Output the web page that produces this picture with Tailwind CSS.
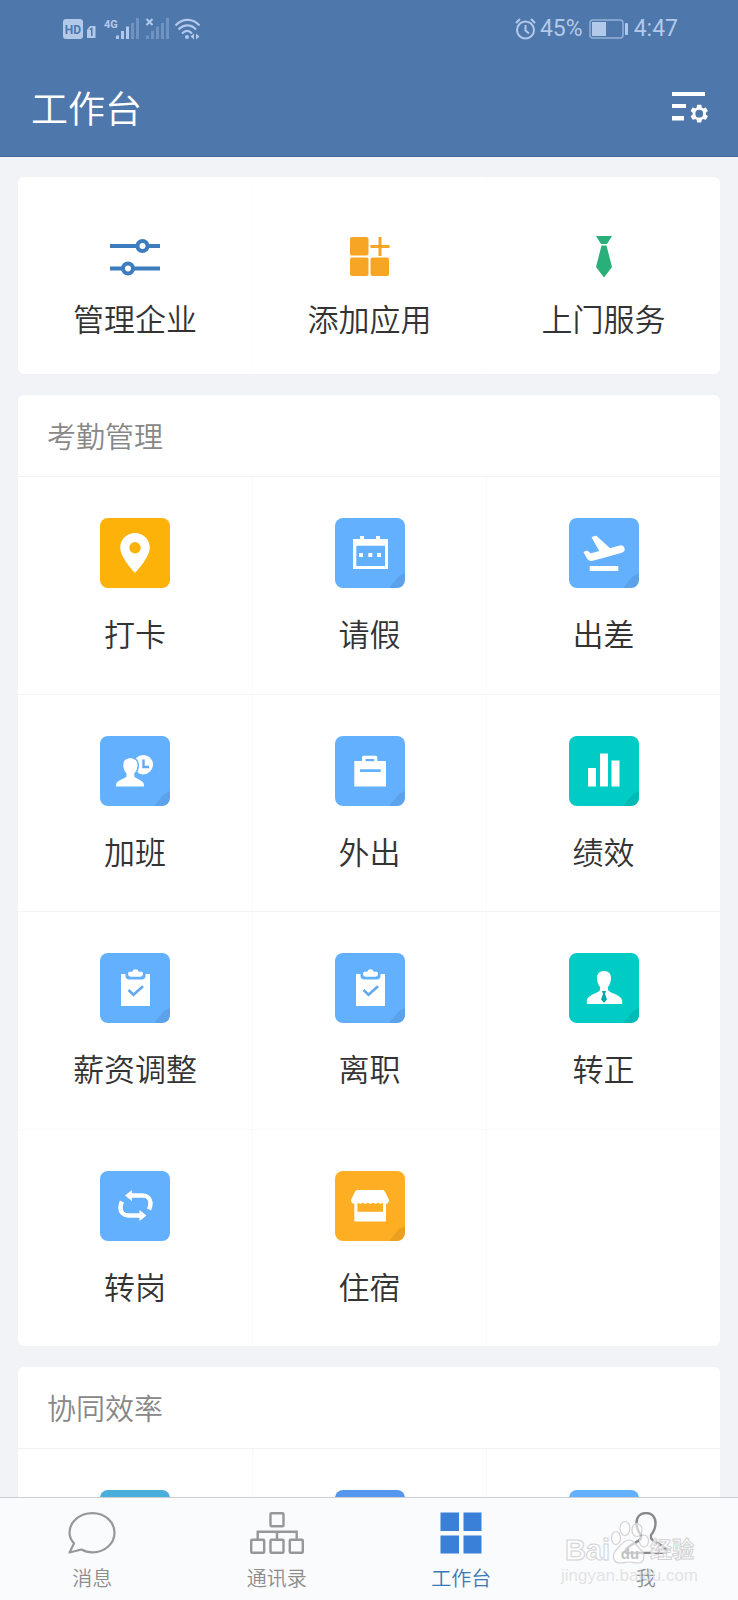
<!DOCTYPE html>
<html lang="zh-CN">
<head>
    <meta charset="UTF-8">
    <meta name="viewport" content="width=device-width, initial-scale=1.0">
    <title>工作台</title>
    <script src="https://cdn.jsdelivr.net/npm/@tailwindcss/browser@4"></script>
</head>
<body class="h-screen flex flex-col overflow-hidden bg-[#f1f3f6] font-['Roboto','Noto_Sans_CJK_SC',sans-serif] font-[350] text-[#333]">

    <!-- shared shapes -->
    <svg class="hidden">
        <symbol id="clipboard" viewBox="0 0 70 70">
            <path fill="#fff" d="M21 21h29v32H21z"/>
            <path fill="#63b0fe" d="M25.500 20h20v3c0 2-1.500 3.500-3.500 3.500H29c-2 0-3.500-1.500-3.500-3.500z"/>
            <path fill="#fff" d="M28 20.500c0-1.200 1-1.700 2-1.700h2.300a3.300 3.300 0 0 1 6.400 0H41c1 0 2 .5 2 1.700 0 2-1 3.200-3 3.200h-9c-2 0-3-1.200-3-3.200z"/>
            <path fill="none" stroke="#63a9f0" stroke-width="2.600" d="M28.500 37l5 4.700 9.500-8.500"/>
        </symbol>
        <symbol id="fold" viewBox="0 0 70 70">
            <path fill="#000" fill-opacity=".08" d="M70 55L64 58 59 64 54 70H70z"/>
        </symbol>
    </svg>

    <header class="shrink-0 bg-[#4e77ab] border-b border-[#44699a] text-white">
        <div class="flex items-center justify-between h-[58px] pl-[63px] pr-[60px] text-[#b3c9ea]">
            <svg class="w-[138px] h-[22px]" viewBox="0 0 138 22" fill="#b3c9ea">
                <rect x="0" y="1" width="20" height="20" rx="3"/>
                <text x="10" y="15.500" text-anchor="middle" font-family="Roboto" font-size="12" font-weight="700" fill="#4e77ab">HD</text>
                <path d="M24 12l3-4h5.500v12H24z"/>
                <path d="M27 11.500l1.800-1v7.500" stroke="#4e77ab" stroke-width="1.500" fill="none"/>
                <text x="41" y="10" font-family="Roboto" font-size="11" font-weight="700">4G</text>
                <path d="M53 17.500h3V21h-3zM58 13h3v8h-3zM63 8.500h3V21h-3z"/>
                <path fill-opacity=".35" d="M68 5h3v16h-3zM73 0h3v21h-3zM83 17.500h3V21h-3zM88 13h3v8h-3zM93 8.500h3V21h-3zM98 5h3v16h-3zM103 0h3v21h-3z"/>
                <path d="M83.500 1l6 6M89.500 1l-6 6" stroke="#b3c9ea" stroke-width="2"/>
                <g fill="none" stroke="#b3c9ea" stroke-width="2.200">
                    <path d="M112.500 7.500c7-7.500 17.500-7.500 24 0M115.500 11.500c5.500-5.500 12.500-5.500 17.500 0M119 15.500c3.500-3.500 7-3.500 10 0"/>
                </g>
                <circle cx="124" cy="19" r="2"/>
                <path d="M131 15.500v6l-3.500-3zM133 15.500v6l3.500-3z"/>
            </svg>
            <div class="flex items-center text-[23px] font-normal leading-7">
                <svg class="w-[21px] h-[22px] mr-1" viewBox="0 0 21 22" fill="none" stroke="#b3c9ea" stroke-width="2">
                    <circle cx="10.500" cy="12" r="8.500"/>
                    <path d="M10.500 7v5.500l3.500 3M1 5l4-4M20 5l-4-4"/>
                </svg>
                <span>45%</span>
                <svg class="w-[39px] h-[20px] mx-1.5" viewBox="0 0 39 20">
                    <rect x="1" y="1" width="33" height="18" rx="3" fill="none" stroke="#b3c9ea" stroke-opacity=".7" stroke-width="1.500"/>
                    <rect x="3" y="3" width="14" height="14" fill="#b3c9ea"/>
                    <rect x="36" y="4" width="3" height="12" rx="1" fill="#b3c9ea"/>
                </svg>
                <span>4:47</span>
            </div>
        </div>
        <div class="flex items-start justify-between h-[98px] pl-[31px] pr-7 pt-[33px]">
            <h1 class="text-[37px] leading-10">工作台</h1>
            <button type="button" aria-label="设置">
                <svg class="w-[38px] h-[33px]" viewBox="0 0 38 33" fill="#fff">
                    <path d="M0 1h33v4H0zM0 13h14v4H0zM0 25h12v4.500H0z"/>
                    <path transform="translate(16.200 11.600) scale(.92)" d="M19.140 12.940c.04-.3.06-.61.06-.94 0-.32-.02-.64-.07-.94l2.030-1.580c.18-.14.23-.41.120-.61l-1.920-3.320c-.12-.22-.37-.29-.59-.22l-2.390.96c-.5-.38-1.030-.7-1.620-.94l-.36-2.540c-.04-.24-.24-.41-.48-.41h-3.840c-.24 0-.43.17-.47.41l-.36 2.540c-.59.24-1.130.57-1.620.94l-2.390-.96c-.22-.08-.47 0-.59.22L2.740 8.870c-.12.21-.08.47.12.61l2.030 1.580c-.05.3-.09.63-.09.94s.02.64.07.94l-2.030 1.580c-.18.14-.23.41-.12.610l1.920 3.320c.12.22.37.29.59.22l2.390-.96c.5.38 1.030.7 1.620.94l.36 2.540c.05.24.24.41.48.41h3.840c.24 0 .44-.17.47-.41l.36-2.540c.59-.24 1.130-.56 1.620-.94l2.390.96c.22.08.47 0 .59-.22l1.920-3.320c.12-.22.07-.47-.12-.61l-2.010-1.580zM12 16.200a4.200 4.200 0 1 1 0-8.400 4.200 4.200 0 0 1 0 8.400z"/>
                </svg>
            </button>
        </div>
    </header>

    <main class="flex-1 min-h-0 overflow-hidden flex flex-col gap-[21px] px-[18px] pt-5">

        <!-- quick actions -->
        <section class="shrink-0 grid grid-cols-3 bg-white rounded-md text-[31px] leading-10">
            <a href="#" class="flex flex-col items-center gap-6 pt-[60px] pb-[33px]">
                <svg class="w-[50px] h-[40px]" viewBox="0 0 50 40" fill="#fff" stroke="#3d7dbf" stroke-width="4">
                    <path d="M0 9h50M0 31.500h50"/>
                    <circle cx="32.500" cy="9" r="5"/>
                    <circle cx="18" cy="31.500" r="5"/>
                </svg>
                <span>管理企业</span>
            </a>
            <a href="#" class="flex flex-col items-center gap-6 pt-[60px] pb-[33px] border-l border-[#fcfcfd]">
                <svg class="w-[40px] h-[40px]" viewBox="0 0 40 40" fill="#f7a524">
                    <rect x="0" y="0" width="18.500" height="18.500" rx="2"/>
                    <rect x="0" y="20.500" width="18.500" height="18.500" rx="2"/>
                    <rect x="20.500" y="20.500" width="18.500" height="18.500" rx="2"/>
                    <path d="M28.500 0h3v8h8v3h-8v8h-3v-8h-8V8h8z"/>
                </svg>
                <span>添加应用</span>
            </a>
            <a href="#" class="flex flex-col items-center gap-6 pt-[60px] pb-[33px] border-l border-[#fcfcfd]">
                <svg class="w-[16px] h-[40px]" viewBox="0 0 16 40" fill="#29b07a" overflow="visible">
                    <path d="M0-1h16l-5 8H5zM5.500 8.500h5L16 30 8 40.500 0 30z"/>
                </svg>
                <span>上门服务</span>
            </a>
        </section>

        <section class="shrink-0 bg-white rounded-md">
            <h2 class="pl-[29px] pr-7 pt-[23px] pb-[18px] text-[29px] leading-10 text-[#888] border-b border-[#f1f1f2]">考勤管理</h2>
            <div class="grid grid-cols-3 text-[31px] leading-10">
                <a href="#" class="flex flex-col items-center gap-7 pt-[41px] pb-[38px] border-b border-[#f3f3f4]">
                    <svg class="w-[70px] h-[70px] rounded-lg bg-[#fdb209]" viewBox="0 0 70 70">
                        <path fill="#fff" fill-rule="evenodd" d="M35 15c-8.300 0-14.800 6.500-14.800 14.600C20.200 40 35 55 35 55s14.800-15 14.800-25.400C49.800 21.500 43.300 15 35 15zm0 9a5.700 5.700 0 1 1 0 11.400A5.700 5.700 0 0 1 35 24z"/>
                    </svg>
                    <span>打卡</span>
                </a>
                <a href="#" class="flex flex-col items-center gap-7 pt-[41px] pb-[38px] border-b border-l border-b-[#f3f3f4] border-l-[#fafafb]">
                    <svg class="w-[70px] h-[70px] rounded-lg bg-[#63b0fe]" viewBox="0 0 70 70">
                        <use href="#fold"/>
                        <path fill="#fff" fill-rule="evenodd" d="M18 21h7v-3h4v3h12v-3h4v3h8v30H18zM21.300 27.700V48H50V27.700z"/>
                        <path fill="#fff" d="M24 35h4v4h-4zM33.300 35h4v4h-4zM42 35h4v4h-4z"/>
                    </svg>
                    <span>请假</span>
                </a>
                <a href="#" class="flex flex-col items-center gap-7 pt-[41px] pb-[38px] border-b border-l border-b-[#f3f3f4] border-l-[#fafafb]">
                    <svg class="w-[70px] h-[70px] rounded-lg bg-[#63b0fe]" viewBox="0 0 70 70">
                        <use href="#fold"/>
                        <path fill="#fff" d="M20.700 48h28.600v5H20.700z"/>
                        <path fill="#fff" stroke="#fff" stroke-width=".8" stroke-linejoin="round" transform="translate(11 11) scale(2)" d="M21.870 9.640c-.21-.8-1.040-1.280-1.840-1.060L14.920 10l-6.900-6.230-1.730.51 3.940 6.970-4.970 1.330-1.770-1.340-1.250.39 1.620 2.960c.6 1 1.400 1.200 2.370.9l5.310-1.420 4.350-1.160L20.800 11.490c.81-.23 1.280-1.050 1.070-1.850z"/>
                    </svg>
                    <span>出差</span>
                </a>

                <a href="#" class="flex flex-col items-center gap-7 pt-[41px] pb-[37px] border-b border-[#f3f3f4]">
                    <svg class="w-[70px] h-[70px] rounded-lg bg-[#63b0fe]" viewBox="0 0 70 70">
                        <use href="#fold"/>
                        <circle cx="43.300" cy="28.700" r="9.700" fill="#fff"/>
                        <path fill="none" stroke="#63a9f0" stroke-width="2.400" d="M43.500 23.500v7.500h5.500"/>
                        <path fill="#fff" stroke="#63b0fe" stroke-width="3" paint-order="stroke" d="M30.300 22.300c-4.800 0-7.300 3-7 7.500.2 3.200 1.200 5.700 3.200 7.400v3.300c-1 2-9.500 3.500-10.300 7.500l-.2 2.500h28l-.2-2.500c-.8-4-8.500-5.500-9.500-7.500v-3.300c2-1.700 3-4.200 3.200-7.400.3-4.500-2.400-7.500-7.200-7.500z"/>
                    </svg>
                    <span>加班</span>
                </a>
                <a href="#" class="flex flex-col items-center gap-7 pt-[41px] pb-[37px] border-b border-l border-b-[#f3f3f4] border-l-[#fafafb]">
                    <svg class="w-[70px] h-[70px] rounded-lg bg-[#63b0fe]" viewBox="0 0 70 70">
                        <use href="#fold"/>
                        <path fill="#fff" fill-rule="evenodd" d="M19.300 25H27v-3.500c0-1 .7-1.700 1.700-1.700h12c1 0 1.600.7 1.600 1.700V25H51v25.500H19.300zM30.500 23v2.300h8.700V23zM25 33.300V36h20.700v-2.700z"/>
                    </svg>
                    <span>外出</span>
                </a>
                <a href="#" class="flex flex-col items-center gap-7 pt-[41px] pb-[37px] border-b border-l border-b-[#f3f3f4] border-l-[#fafafb]">
                    <svg class="w-[70px] h-[70px] rounded-lg bg-[#00cbc5]" viewBox="0 0 70 70">
                        <use href="#fold"/>
                        <path fill="#fff" d="M19 32h8v18.500h-8zM31 17.500h8v33h-8zM42.500 24.500h8v26h-8z"/>
                    </svg>
                    <span>绩效</span>
                </a>

                <a href="#" class="flex flex-col items-center gap-7 pt-[41px] pb-[38px] border-b border-[#fafafb]">
                    <svg class="w-[70px] h-[70px] rounded-lg bg-[#63b0fe]" viewBox="0 0 70 70">
                        <use href="#fold"/>
                        <use href="#clipboard"/>
                    </svg>
                    <span>薪资调整</span>
                </a>
                <a href="#" class="flex flex-col items-center gap-7 pt-[41px] pb-[38px] border-b border-l border-[#fafafb]">
                    <svg class="w-[70px] h-[70px] rounded-lg bg-[#63b0fe]" viewBox="0 0 70 70">
                        <use href="#fold"/>
                        <use href="#clipboard"/>
                    </svg>
                    <span>离职</span>
                </a>
                <a href="#" class="flex flex-col items-center gap-7 pt-[41px] pb-[38px] border-b border-l border-[#fafafb]">
                    <svg class="w-[70px] h-[70px] rounded-lg bg-[#00cbc5]" viewBox="0 0 70 70">
                        <use href="#fold"/>
                        <path fill="#fff" d="M35 18c-4.700 0-7.300 3-7 7.600.2 3.600 1.300 6.400 3 8.400v3c-1.500 3-12.500 5-13.200 10.500V51h35.400v-3.500C52.500 42 40.500 40 39 37v-3c1.700-2 2.800-4.800 3-8.400.3-4.600-2.300-7.600-7-7.600z"/>
                        <path fill="#00aaa6" d="M33 38h4l-1 3 2 5.500-3 3.300-3-3.300 2-5.500z"/>
                    </svg>
                    <span>转正</span>
                </a>

                <a href="#" class="flex flex-col items-center gap-7 pt-[41px] pb-[37px]">
                    <svg class="w-[70px] h-[70px] rounded-lg bg-[#63b0fe]" viewBox="0 0 70 70">
                        <g fill="none" stroke="#fff" stroke-width="4.500">
                            <path d="M30 24.500h12.500c5 0 8 3.500 8 7.500 0 2.500-.5 4.500-1.500 6.500"/>
                            <path d="M41 44.500H28.500c-5 0-8-3.500-8-7.500 0-2.500.5-4.500 1.500-6.500"/>
                        </g>
                        <path fill="#fff" d="M25 24.500l7-5.500v11zM46.500 44.500l-7-5.500v11z"/>
                    </svg>
                    <span>转岗</span>
                </a>
                <a href="#" class="flex flex-col items-center gap-7 pt-[41px] pb-[37px] border-l border-[#fafafb]">
                    <svg class="w-[70px] h-[70px] rounded-lg bg-[#feae22]" viewBox="0 0 70 70">
                        <use href="#fold"/>
                        <path fill="#fff" fill-rule="evenodd" d="M22 19h26.500l1.500 1.500 4 8.500c0 2-1 3.500-3 4v17.500H19.300V33c-2-.5-3.300-2-3.300-4l4-8.500zM22.500 31.500v9.200H48v-9.200c-1.500 1.500-3.500 1.700-5 0-1.500 1.700-3.500 1.700-5 0-1.500 1.700-3.700 1.700-5.200 0-1.500 1.700-3.600 1.700-5.100 0-1.500 1.700-3.700 1.500-5.200 0z"/>
                    </svg>
                    <span>住宿</span>
                </a>
                <div class="border-l border-[#fafafb]"></div>
            </div>
        </section>

        <!-- runs on below the tab bar -->
        <section class="shrink-0 bg-white rounded-md">
            <h2 class="pl-[29px] pr-7 pt-[23px] pb-[18px] text-[29px] leading-10 text-[#888] border-b border-[#f1f1f2]">协同效率</h2>
            <div class="grid grid-cols-3">
                <div class="flex justify-center pt-[41px] pb-10"><div class="size-[70px] rounded-lg bg-[#4aaedb]"></div></div>
                <div class="flex justify-center pt-[41px] pb-10 border-l border-[#f8f8f9]"><div class="size-[70px] rounded-lg bg-[#5597ee]"></div></div>
                <div class="flex justify-center pt-[41px] pb-10 border-l border-[#f8f8f9]"><div class="size-[70px] rounded-lg bg-[#63b0fe]"></div></div>
            </div>
        </section>
    </main>

    <nav class="relative shrink-0 grid grid-cols-4 bg-[#fafbfc] border-t border-[#cdcfd1] pt-3.5 pb-[7px] text-xl leading-7 text-[#8d8d8d]">
        <a href="#" class="flex flex-col items-center gap-[11px]">
            <svg class="w-[48px] h-[42px]" viewBox="0 0 48 42" fill="none" stroke="#979797" stroke-width="2.200" stroke-linejoin="round">
                <path d="M1.500 40.500l4.500-9C3 28 1.500 24.500 1.500 20.700 1.500 10 11.500 1.200 24.300 1.200S46.500 10 46.500 20.700 37 40.300 24.500 40.300c-4 0-8-1-11-2.800z"/>
            </svg>
            <span>消息</span>
        </a>
        <a href="#" class="flex flex-col items-center gap-[11px]">
            <svg class="w-[54px] h-[42px]" viewBox="0 0 54 42" fill="none" stroke="#979797" stroke-width="2.400">
                <rect x="20.500" y="1.200" width="13" height="13" rx="1"/>
                <rect x="1.200" y="27.800" width="13" height="13" rx="1"/>
                <rect x="20.500" y="27.800" width="13" height="13" rx="1"/>
                <rect x="39.800" y="27.800" width="13" height="13" rx="1"/>
                <path d="M7.700 27.800v-8h39v8M27 19.800v8"/>
            </svg>
            <span>通讯录</span>
        </a>
        <a href="#" aria-current="page" class="flex flex-col items-center gap-[11px] text-[#3a78b8]">
            <svg class="w-[42px] h-[42px]" viewBox="0 0 42 42" fill="#3b80d8">
                <path d="M.5.500H19v18.500H.500zM23.500.500H41.500v18.500h-18zM.5 23.500H19v18H.500zM23.500 23.500h18v18h-18z"/>
            </svg>
            <span>工作台</span>
        </a>
        <a href="#" class="flex flex-col items-center gap-[11px]">
            <svg class="w-[44px] h-[42px]" viewBox="0 0 44 42" fill="none" stroke="#8a8a8a" stroke-width="2.400" stroke-linejoin="round">
                <path d="M22 1c-6 0-9.500 4-9.500 10 0 5 1.500 8.500 4.500 12v3c-1.500 4.500-13 6.500-15.500 12.500-.6 1.800.3 2.500 2 2.500h37c1.700 0 2.600-.7 2-2.500C40 32.500 28.500 30.500 27 26v-3c3-3.500 4.500-7 4.500-12 0-6-3.500-10-9.500-10z"/>
            </svg>
            <span>我</span>
        </a>

        <!-- watermark -->
        <div class="absolute right-10 bottom-3 flex flex-col items-center font-['Liberation_Sans','Noto_Sans_CJK_SC',sans-serif] font-bold text-white/70 pointer-events-none">
            <div class="flex items-center h-7">
                <span class="text-[29px] [-webkit-text-stroke:1px_#d3d3d5]">Bai</span>
                <svg class="w-[40px] h-[44px] -mt-4" viewBox="0 0 40 44" fill="#fff" fill-opacity=".6" stroke="#d3d3d5" stroke-width="1.200">
                    <ellipse cx="6" cy="18" rx="4.500" ry="6.500"/>
                    <ellipse cx="15" cy="8.500" rx="5" ry="7"/>
                    <ellipse cx="27" cy="10" rx="5" ry="6.500"/>
                    <ellipse cx="34" cy="21" rx="4.500" ry="6"/>
                    <path d="M19 20c5 0 7 5 11 9 6 6 5 14-2 14-3 0-5-1-9-1s-6 1-9 1c-7 0-9-8-3-14 4-4 7-9 12-9z"/>
                    <text x="20" y="39" text-anchor="middle" font-size="15" stroke="none" fill="#c2c2c4" fill-opacity="1">du</text>
                </svg>
                <span class="text-[22px] [-webkit-text-stroke:1px_#d3d3d5]">经验</span>
            </div>
            <span class="text-[17px] leading-6 font-normal text-[#dcdcde]/80">jingyan.baidu.com</span>
        </div>
    </nav>
</body>
</html>
